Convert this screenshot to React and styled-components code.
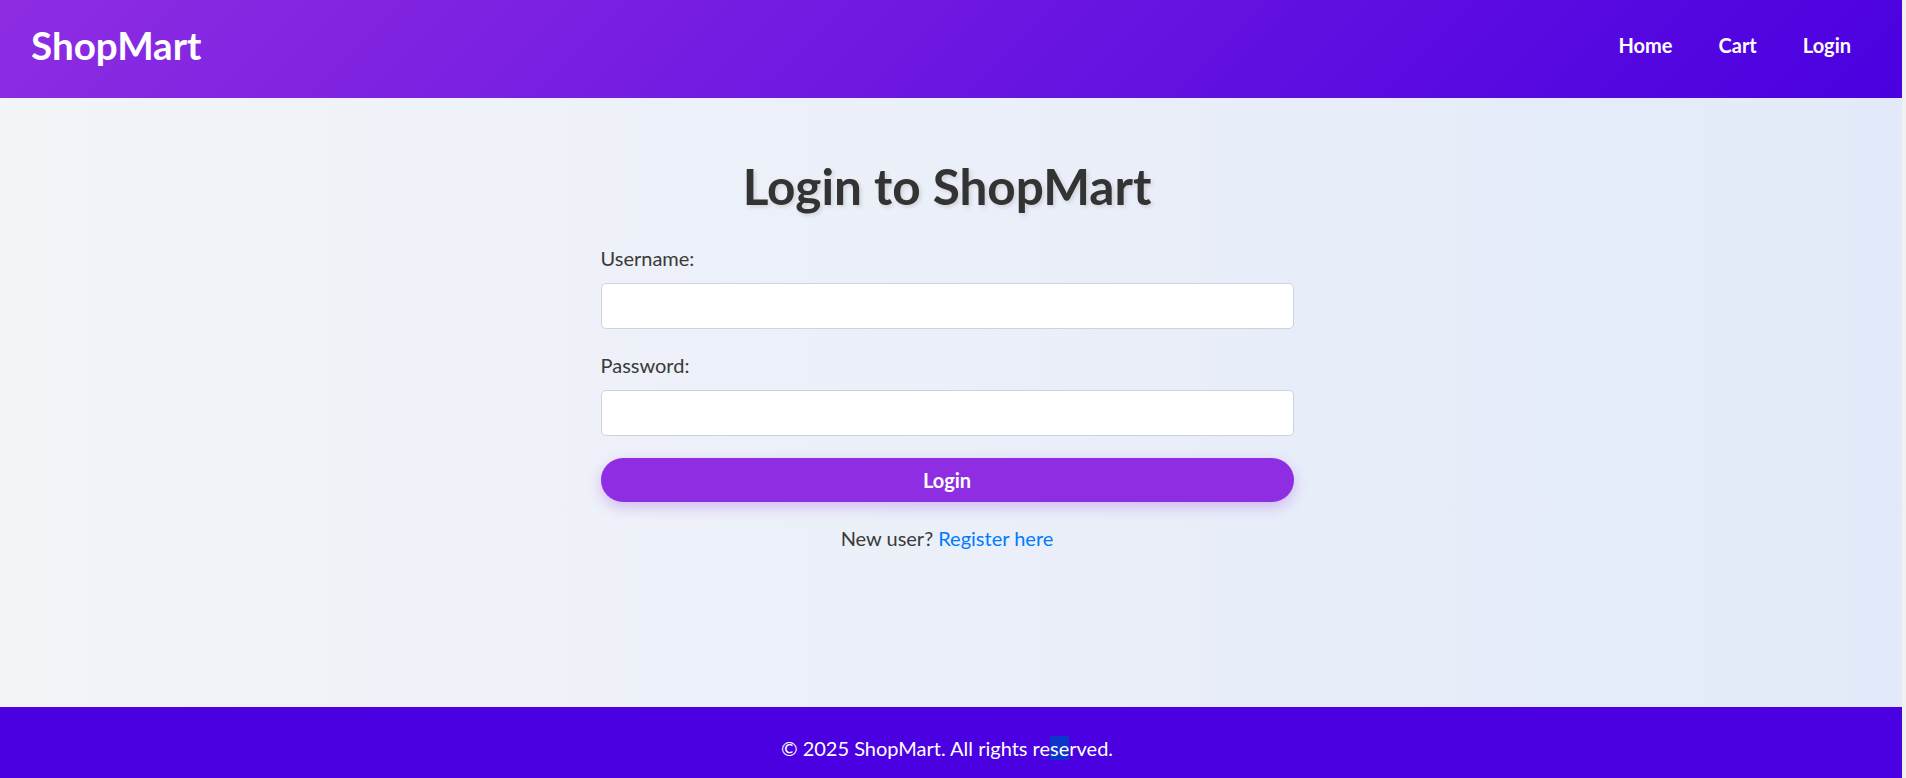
import React from "react";
import styled, { createGlobalStyle } from "styled-components";

const GlobalStyle = createGlobalStyle`
  * { box-sizing: border-box; }
  html, body {
    margin: 0;
    padding: 0;
    background: #f0f0f0;
    font-family: Lato, "Open Sans", "Noto Sans", sans-serif;
    overflow: hidden;
  }
`;

const Page = styled.div`
  width: calc(100% - 4px);
  min-height: 100vh;
  display: flex;
  flex-direction: column;
`;

const Header = styled.header`
  height: 98px;
  padding: 0 51px 8px 31px;
  display: flex;
  align-items: center;
  justify-content: space-between;
  background: linear-gradient(135deg, #8e2de2 0%, #4a00e0 100%);
  color: #fff;
`;

const Logo = styled.div`
  font-size: 38.6px;
  font-weight: 700;
  line-height: 1.2;
`;

const Nav = styled.nav`
  display: flex;
  align-items: center;
  gap: 46px;
`;

const NavLink = styled.a`
  color: #fff;
  text-decoration: none;
  font-size: 20px;
  font-weight: 700;
  line-height: 1.2;
  cursor: pointer;
`;

const Main = styled.main`
  flex: 1;
  display: flex;
  justify-content: center;
  padding: 59px 8px 0 0;
  background: linear-gradient(to right, #f3f4f8 0%, #e2eaf9 100%);
`;

const Container = styled.div`
  width: 693px;
  display: flex;
  flex-direction: column;
`;

const Title = styled.h1`
  margin: 0 0 30px;
  text-align: center;
  font-size: 49.5px;
  font-weight: 700;
  line-height: 1.2;
  color: #333;
  text-shadow: 2px 2px 4px rgba(0, 0, 0, 0.12);
`;

const FieldGroup = styled.div`
  display: flex;
  flex-direction: column;
  margin-bottom: ${(p) => p.$mb}px;
`;

const Label = styled.label`
  font-size: 20px;
  line-height: 1.2;
  color: #3a3a3a;
  margin-bottom: 13px;
`;

const Input = styled.input`
  height: 46px;
  width: 100%;
  border: 1px solid #cdd3dd;
  border-radius: 5px;
  background: #fff;
  font-size: 20px;
  padding: 0 12px;
  outline: none;
`;

const Button = styled.button`
  height: 44px;
  width: 100%;
  border: none;
  border-radius: 999px;
  background: #8e2de2;
  color: #fff;
  font-family: inherit;
  font-size: 20px;
  font-weight: 700;
  cursor: pointer;
  box-shadow: 0 5px 14px rgba(142, 45, 226, 0.28);
`;

const Note = styled.p`
  margin: 24px 0 0;
  text-align: center;
  font-size: 20px;
  line-height: 1.2;
  color: #3a3a3a;
`;

const Link = styled.a`
  color: #007bff;
  text-decoration: none;
`;

const Footer = styled.footer`
  height: 71px;
  padding: 29px 8px 0 0;
  background: #4a00e0;
  color: #fff;
  text-align: center;
  font-size: 20px;
  line-height: 1.2;
`;

const Selected = styled.span`
  background: #0d35c9;
`;

export default function App() {
  return (
    <>
      <GlobalStyle />
      <Page>
        <Header>
          <Logo>ShopMart</Logo>
          <Nav>
            <NavLink>Home</NavLink>
            <NavLink>Cart</NavLink>
            <NavLink>Login</NavLink>
          </Nav>
        </Header>
        <Main>
          <Container>
            <Title>Login to ShopMart</Title>
            <FieldGroup $mb={24}>
              <Label htmlFor="username">Username:</Label>
              <Input id="username" type="text" />
            </FieldGroup>
            <FieldGroup $mb={22}>
              <Label htmlFor="password">Password:</Label>
              <Input id="password" type="password" />
            </FieldGroup>
            <Button type="button">Login</Button>
            <Note>
              New user? <Link>Register here</Link>
            </Note>
          </Container>
        </Main>
        <Footer>
          © 2025 ShopMart. All rights re<Selected>se</Selected>rved.
        </Footer>
      </Page>
    </>
  );
}
